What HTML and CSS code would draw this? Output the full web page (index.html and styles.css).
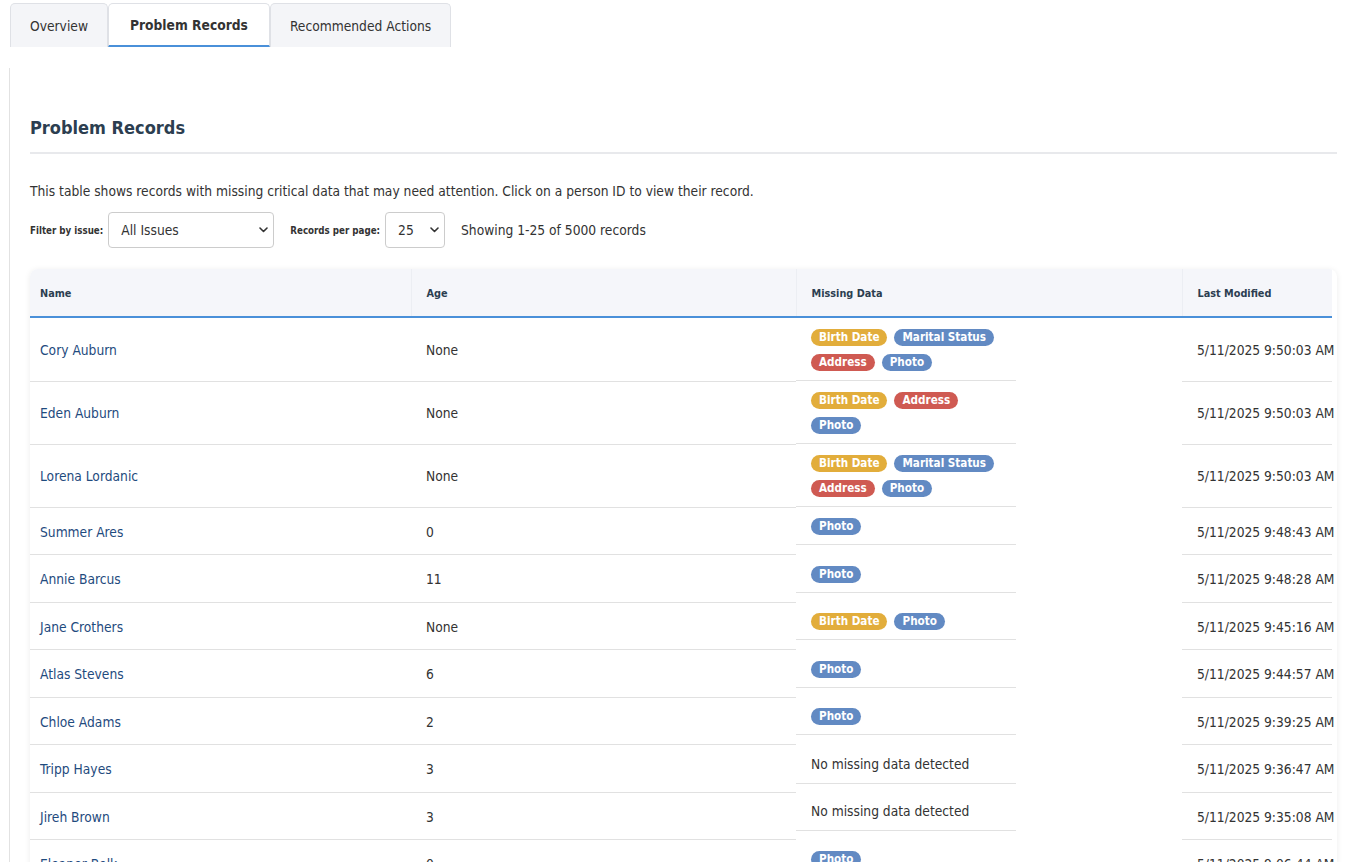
FILE: index.html
```html
<!DOCTYPE html>
<html lang="en">
<head>
<meta charset="utf-8">
<title>Problem Records</title>
<link rel="stylesheet" href="styles.css">
</head>
<body>
<nav class="tabs">
  <a class="tab">Overview</a>
  <a class="tab active">Problem Records</a>
  <a class="tab">Recommended Actions</a>
</nav>
<section class="panel">
  <h2 class="panel-title">Problem Records</h2>
  <p class="desc">This table shows records with missing critical data that may need attention. Click on a person ID to view their record.</p>
  <div class="filters">
    <label class="flabel">Filter by issue:</label>
    <span class="select-wrap sel-issue">
      <select class="select"><option>All Issues</option></select>
      <svg class="chev" width="9" height="6" viewBox="0 0 9 6"><path d="M1 1l3.5 3.5L8 1" fill="none" stroke="#333" stroke-width="1.6" stroke-linecap="round" stroke-linejoin="round"/></svg>
    </span>
    <label class="flabel">Records per page:</label>
    <span class="select-wrap sel-per">
      <select class="select"><option>25</option></select>
      <svg class="chev" width="9" height="6" viewBox="0 0 9 6"><path d="M1 1l3.5 3.5L8 1" fill="none" stroke="#333" stroke-width="1.6" stroke-linecap="round" stroke-linejoin="round"/></svg>
    </span>
    <span class="count">Showing 1-25 of 5000 records</span>
  </div>
  <div class="table-box">
    <table class="records">
      <colgroup><col class="c-name"><col class="c-age"><col class="c-miss"><col class="c-mod"></colgroup>
      <thead>
        <tr><th>Name</th><th>Age</th><th>Missing Data</th><th>Last Modified</th></tr>
      </thead>
      <tbody>
        <tr><td><a class="pname">Cory Auburn</a></td><td>None</td><td class="miss"><div class="miss-box"><span class="badge b-yellow">Birth Date</span><span class="badge b-blue">Marital Status</span><span class="badge b-red">Address</span><span class="badge b-blue">Photo</span></div></td><td>5/11/2025 9:50:03 AM</td></tr>
        <tr><td><a class="pname">Eden Auburn</a></td><td>None</td><td class="miss"><div class="miss-box"><span class="badge b-yellow">Birth Date</span><span class="badge b-red">Address</span><span class="badge b-blue">Photo</span></div></td><td>5/11/2025 9:50:03 AM</td></tr>
        <tr><td><a class="pname">Lorena Lordanic</a></td><td>None</td><td class="miss"><div class="miss-box"><span class="badge b-yellow">Birth Date</span><span class="badge b-blue">Marital Status</span><span class="badge b-red">Address</span><span class="badge b-blue">Photo</span></div></td><td>5/11/2025 9:50:03 AM</td></tr>
        <tr><td><a class="pname">Summer Ares</a></td><td>0</td><td class="miss"><div class="miss-box"><span class="badge b-blue">Photo</span></div></td><td>5/11/2025 9:48:43 AM</td></tr>
        <tr><td><a class="pname">Annie Barcus</a></td><td>11</td><td class="miss"><div class="miss-box"><span class="badge b-blue">Photo</span></div></td><td>5/11/2025 9:48:28 AM</td></tr>
        <tr><td><a class="pname">Jane Crothers</a></td><td>None</td><td class="miss"><div class="miss-box"><span class="badge b-yellow">Birth Date</span><span class="badge b-blue">Photo</span></div></td><td>5/11/2025 9:45:16 AM</td></tr>
        <tr><td><a class="pname">Atlas Stevens</a></td><td>6</td><td class="miss"><div class="miss-box"><span class="badge b-blue">Photo</span></div></td><td>5/11/2025 9:44:57 AM</td></tr>
        <tr><td><a class="pname">Chloe Adams</a></td><td>2</td><td class="miss"><div class="miss-box"><span class="badge b-blue">Photo</span></div></td><td>5/11/2025 9:39:25 AM</td></tr>
        <tr><td><a class="pname">Tripp Hayes</a></td><td>3</td><td class="miss"><div class="miss-box none">No missing data detected</div></td><td>5/11/2025 9:36:47 AM</td></tr>
        <tr><td><a class="pname">Jireh Brown</a></td><td>3</td><td class="miss"><div class="miss-box none">No missing data detected</div></td><td>5/11/2025 9:35:08 AM</td></tr>
        <tr><td><a class="pname">Eleanor Belk</a></td><td>0</td><td class="miss"><div class="miss-box"><span class="badge b-blue">Photo</span></div></td><td>5/11/2025 9:06:44 AM</td></tr>
      </tbody>
    </table>
  </div>
</section>
</body>
</html>
```
FILE: styles.css
```css
* { box-sizing: border-box; }
html, body { margin: 0; padding: 0; background: #fff; }
body {
  font-family: "DejaVu Sans Condensed", "DejaVu Sans", sans-serif;
  font-size: 13.7px;
  color: #333;
}
.tabs {
  display: flex;
  gap: 0;
  padding: 3px 0 0 10px;
}
.tab {
  display: flex;
  align-items: center;
  height: 44px;
  padding: 0 19px;
  background: #f4f5f8;
  border: 1px solid #dfe1e6;
  border-bottom: none;
  border-radius: 5px 5px 0 0;
  color: #333;
  font-size: 13.7px;
}
.tab.active {
  padding: 0 21px;
  background: #fff;
  font-weight: bold;
  border-bottom: 2px solid #4a90d9;
}
.panel {
  margin: 21px 0 0 9px;
  padding: 0 16px 0 20px;
  border-left: 1px solid #e2e2e2;
}
.panel-title {
  margin: 0;
  padding: 49px 0 13px;
  font-size: 18px;
  line-height: 22px;
  font-weight: bold;
  color: #2c3e50;
  border-bottom: 2px solid #e8e9ec;
}
.desc {
  margin: 27px 0 0;
  line-height: 20px;
}
.filters {
  display: flex;
  align-items: center;
  margin-top: 11px;
  height: 36px;
}
.flabel {
  font-size: 9.7px;
  font-weight: bold;
  color: #333;
  margin-right: 5px;
}
.select-wrap {
  position: relative;
  display: inline-block;
  margin-right: 16px;
}
.select {
  appearance: none;
  -webkit-appearance: none;
  height: 36px;
  border: 1px solid #ccc;
  border-radius: 4px;
  background: #fff;
  padding: 0 12px;
  font-family: inherit;
  font-size: 13.7px;
  color: #333;
}
.sel-issue .select { width: 166px; }
.sel-per .select { width: 60px; }
.chev {
  position: absolute;
  right: 6px;
  top: 15px;
  pointer-events: none;
}
.count { color: #333; }
.table-box {
  margin-top: 21px;
  border-radius: 8px 8px 0 0;
  overflow: hidden;
  box-shadow: 0 1px 6px rgba(0, 0, 0, 0.08);
  background: #fff;
}
.records {
  margin-left: -5px;
  width: 1307px;
  table-layout: fixed;
  border-collapse: collapse;
}
.c-name { width: 386px; }
.c-age { width: 385px; }
.c-miss { width: 386px; }
.c-mod { width: 150px; }
.records th {
  background: #f5f6fa;
  text-align: left;
  font-size: 10.8px;
  font-weight: bold;
  color: #2c3e50;
  padding: 16px 15px 14px;
  line-height: 17px;
  border-right: 1px solid #eceef3;
  border-bottom: 2px solid #4a90d9;
}
.records th:last-child { border-right: none; }
.records td {
  padding: 16px 15px 14px;
  line-height: 16.5px;
  vertical-align: middle;
  white-space: nowrap;
  border-bottom: 1px solid #e1e1e1;
}
.records td.miss {
  padding: 0;
  vertical-align: top;
  border-bottom: none;
}
.miss-box {
  width: 220px;
  display: flex;
  flex-wrap: wrap;
  gap: 8px 7px;
  padding: 11px 15px 9px;
  border-bottom: 1px solid #e1e1e1;
}
.miss-box.none {
  line-height: 18px;
  padding: 10px 15px;
}
.pname { color: #1f4b7e; }
.badge {
  display: inline-block;
  padding: 0 8px;
  height: 17px;
  line-height: 17px;
  border-radius: 9px;
  font-size: 11.6px;
  font-weight: bold;
  color: #fff;
}
.b-yellow { background: #e2ad3b; }
.b-blue { background: #628ac3; }
.b-red { background: #cf5a52; }
```
